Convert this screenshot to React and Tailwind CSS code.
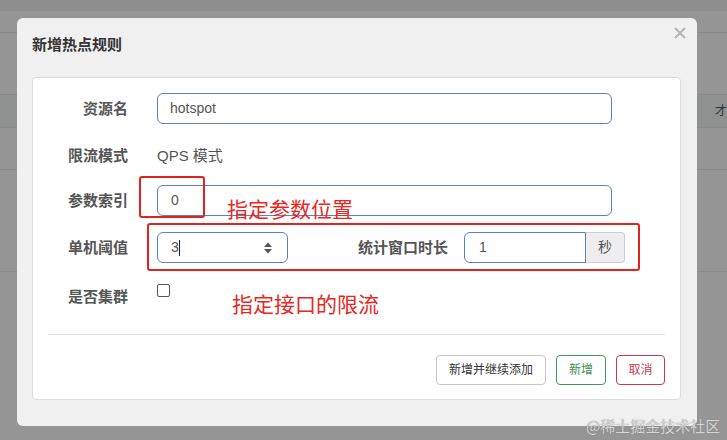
import React from "react";

const F = "font-['Liberation_Sans','Noto_Sans_CJK_SC',sans-serif]";

function Label({ children }) {
  return (
    <div className="w-[95px] shrink-0 text-right text-[15px] leading-[20px] font-bold text-[#555]">
      {children}
    </div>
  );
}

export default function App() {
  return (
    <div className={`relative w-[727px] h-[440px] overflow-hidden bg-[#959595] ${F}`}>
      {/* background page (dimmed) */}
      <div className="flex flex-col">
        <div className="h-[11px] bg-[#8e8e8e]" />
        <div className="h-[21px]" />
        <div className="h-px bg-[#888]" />
        <div className="h-[61px]" />
        <div className="h-[34px] bg-[#8f9191] border-y border-[#8a8a8a] flex justify-end items-center">
          <span className="text-[12px] leading-[14px] text-[#333]">才</span>
        </div>
        <div className="h-[41px]" />
        <div className="h-px bg-[#8a8a8a]" />
        <div className="h-[101px]" />
        <div className="h-px bg-[#8a8a8a]" />
      </div>

      {/* modal */}
      <div className="absolute left-[17px] top-[18px] w-[680px] h-[408px] bg-[#f0f0f0] rounded-[6px] flex flex-col px-[15px]">
        <div className="pt-[17px] flex items-center justify-between">
          <div className="text-[15px] leading-[20px] font-bold text-[#333]">新增热点规则</div>
          <svg width="12" height="12" viewBox="0 0 12 12" className="mr-[-4px] mt-[-24px]">
            <path d="M1 1 L11 11 M11 1 L1 11" stroke="#b3b3b3" strokeWidth="2" />
          </svg>
        </div>

        <div className="mt-[22px] w-[649px] h-[323px] bg-white border border-[#ddd] rounded-[4px] flex flex-col pt-[15px] px-[15px]">
          {/* 资源名 */}
          <div className="flex items-center h-[31px] -ml-[15px]">
            <Label>资源名</Label>
            <div className="ml-[29px] w-[455px] h-[31px] border border-[#5785b2] rounded-[6px] flex items-center pl-[12px] text-[14px] text-[#555]">
              hotspot
            </div>
          </div>
          {/* 限流模式 */}
          <div className="flex items-center h-[20px] mt-[22px] -ml-[15px]">
            <Label>限流模式</Label>
            <div className="ml-[29px] text-[15px] leading-[20px] text-[#555]">QPS 模式</div>
          </div>
          {/* 参数索引 */}
          <div className="flex items-center h-[31px] mt-[19px] -ml-[15px]">
            <Label>参数索引</Label>
            <div className="ml-[29px] w-[455px] h-[31px] border border-[#5785b2] rounded-[6px] flex items-center pl-[13px] text-[14px] text-[#555]">
              0
            </div>
          </div>
          {/* 单机阈值 */}
          <div className="flex items-center h-[31px] mt-[16px] -ml-[15px]">
            <Label>单机阈值</Label>
            <div className="ml-[29px] w-[131px] h-[31px] border border-[#5785b2] rounded-[6px] flex items-center pl-[13px] pr-[14px] text-[14px] text-[#555]">
              <span>3</span>
              <span className="w-px h-[16px] bg-[#222]" />
              <svg width="10" height="14" viewBox="0 0 10 14" className="ml-auto">
                <path d="M1 6 L5 1.5 L9 6 Z" fill="#555" />
                <path d="M1 8 L5 12.5 L9 8 Z" fill="#555" />
              </svg>
            </div>
            <div className="ml-[70px] text-[15px] leading-[20px] font-bold text-[#555]">统计窗口时长</div>
            <div className="ml-[16px] flex h-[31px]">
              <div className="w-[122px] h-full border border-[#5785b2] rounded-l-[6px] flex items-center pl-[14px] text-[14px] text-[#555]">
                1
              </div>
              <div className="w-[39px] h-full bg-[#eee] border border-l-0 border-[#ccc] rounded-r-[4px] flex items-center justify-center text-[14px] text-[#555]">
                秒
              </div>
            </div>
          </div>
          {/* 是否集群 */}
          <div className="flex items-start h-[26px] mt-[21px] -ml-[15px]">
            <div className="mt-[3px]">
              <Label>是否集群</Label>
            </div>
            <div className="ml-[29px] w-[13px] h-[13px] border border-[#555] rounded-[2px] bg-white" />
          </div>

          <div className="mt-[24px] h-px bg-[#e3e3e3]" />

          <div className="mt-[20px] flex justify-end gap-[10px] text-[12px]">
            <div className="h-[30px] px-[12px] flex items-center border border-[#c8c8c8] rounded-[4px] text-[#333] bg-white">
              新增并继续添加
            </div>
            <div className="h-[30px] w-[50px] flex items-center justify-center border border-[#3e9b56] rounded-[4px] text-[#3f8f4f] bg-white">
              新增
            </div>
            <div className="h-[30px] w-[49px] flex items-center justify-center border border-[#c9384a] rounded-[4px] text-[#c4404a] bg-white">
              取消
            </div>
          </div>
        </div>
      </div>

      {/* annotations */}
      <div className="absolute left-[139px] top-[176px] w-[66px] h-[42px] border-[2.5px] border-[#e0231d] rounded-[3px]" />
      <div className="absolute left-[147px] top-[223px] w-[493px] h-[48px] border-[2.5px] border-[#e0231d] rounded-[3px]" />
      <div className="absolute left-[227px] top-[194px] text-[21px] leading-[28px] text-[#e8271f] font-['Noto_Sans_CJK_SC',sans-serif]">
        指定参数位置
      </div>
      <div className="absolute left-[232px] top-[289px] text-[21px] leading-[28px] text-[#e8271f] font-['Noto_Sans_CJK_SC',sans-serif]">
        指定接口的限流
      </div>

      {/* watermark */}
      <div className="absolute left-[586px] top-[416px] text-[15px] leading-[20px] text-[#d6d6d6] font-['Noto_Sans_CJK_SC',sans-serif] [text-shadow:0_0_1px_#777]">
        @稀土掘金技术社区
      </div>
    </div>
  );
}
